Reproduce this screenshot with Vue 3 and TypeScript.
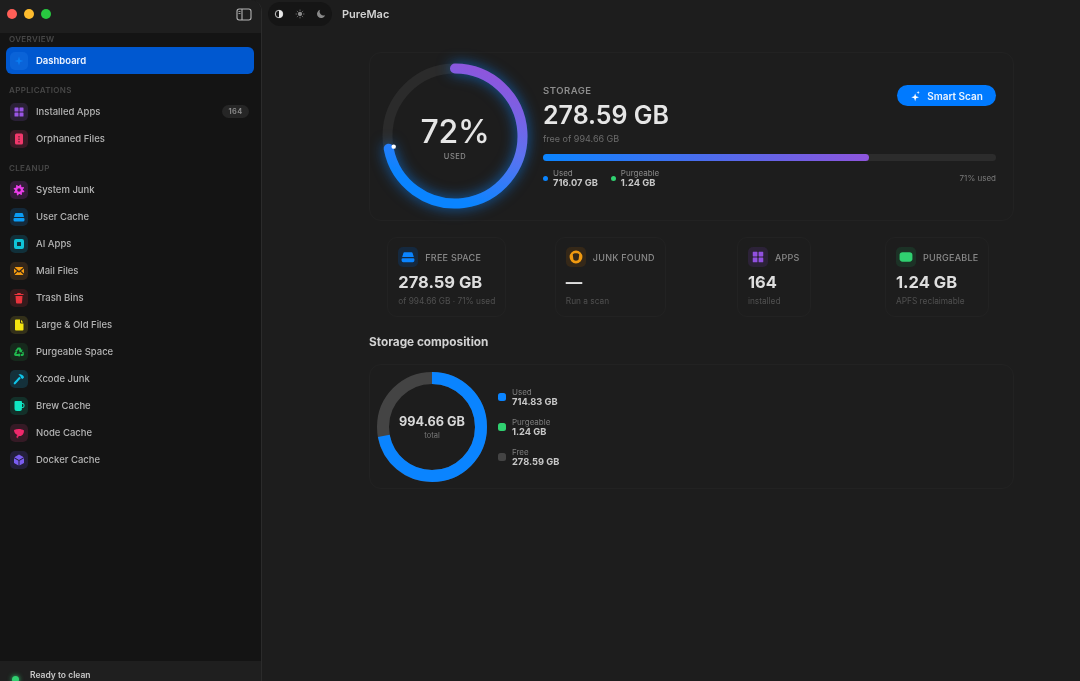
<template>
  <div class="window">
    <aside class="sidebar">
      <div class="titlebar">
        <div class="lights">
          <span class="light red"></span>
          <span class="light yellow"></span>
          <span class="light green"></span>
        </div>
        <svg class="toggle" viewBox="0 0 16 13" width="16" height="13">
          <rect x="1" y="1" width="14" height="11" rx="2.2" fill="none" stroke="#b5b5b5" stroke-width="1.1" />
          <rect x="2.5" y="3" width="2" height="1" fill="#9a9a9a" />
          <rect x="2.5" y="5" width="2" height="1" fill="#9a9a9a" />
          <path d="M6 1v11" stroke="#b5b5b5" stroke-width="1.1" />
        </svg>
      </div>

      <nav class="nav">
        <section v-for="group in groups" :key="group.title" class="group">
          <h4>{{ group.title }}</h4>
          <a v-for="item in group.items" :key="item.label" class="row" :class="{ active: item.active }">
            <span class="tile" :style="{ background: item.tint, color: item.color }">
              <svg viewBox="0 0 24 24" width="12" height="12">
                <path :d="icons[item.icon]" fill="currentColor" fill-rule="evenodd" />
              </svg>
            </span>
            <span class="label">{{ item.label }}</span>
            <span v-if="item.badge" class="badge">{{ item.badge }}</span>
          </a>
        </section>
      </nav>

      <div class="status">
        <span class="status-dot"></span>
        <span>Ready to clean</span>
      </div>
    </aside>

    <main class="main">
      <header class="topbar">
        <div class="modes">
          <svg viewBox="0 0 12 12" width="10" height="10">
            <circle cx="6" cy="6" r="4.5" fill="none" stroke="#e8e8e8" stroke-width="1" />
            <path d="M6 1.5a4.5 4.5 0 0 1 0 9z" fill="#e8e8e8" />
          </svg>
          <svg viewBox="0 0 12 12" width="10" height="10">
            <circle cx="6" cy="6" r="2.6" fill="#8a8a8a" />
            <path d="M6 .8v1.4M6 9.8v1.4M.8 6h1.4M9.8 6h1.4M2.3 2.3l1 1M8.7 8.7l1 1M2.3 9.7l1-1M8.7 3.3l1-1" stroke="#8a8a8a" stroke-width="1" />
          </svg>
          <svg viewBox="0 0 12 12" width="10" height="10">
            <path d="M5 1a5 5 0 1 0 6 6.4A4.6 4.6 0 0 1 5 1z" fill="#8a8a8a" />
          </svg>
        </div>
        <span class="app-name">PureMac</span>
      </header>

      <div class="content">
        <section class="hero">
          <div class="ring">
            <svg viewBox="0 0 146 146" width="146" height="146">
              <defs>
                <linearGradient id="ringGrad" gradientUnits="userSpaceOnUse" x1="108" y1="10" x2="58" y2="128">
                  <stop offset="0" stop-color="#8e55dc" />
                  <stop offset="0.5" stop-color="#5d72f0" />
                  <stop offset="1" stop-color="#0a84ff" />
                </linearGradient>
              </defs>
              <circle cx="73" cy="73" :r="ringR" fill="none" stroke="#2b2b2b" stroke-width="10" />
              <path
                class="ring-arc"
                :d="ringArc"
                fill="none"
                stroke="url(#ringGrad)"
                stroke-width="10"
                stroke-linecap="round"
              />
              <circle :cx="ringDot.x" :cy="ringDot.y" r="2.2" fill="#fff" />
            </svg>
            <div class="ring-text">
              <strong>72%</strong>
              <span>USED</span>
            </div>
          </div>

          <div class="hero-body">
            <div class="hero-top">
              <div>
                <div class="eyebrow">STORAGE</div>
                <div class="free">278.59 GB</div>
                <div class="free-of">free of 994.66 GB</div>
              </div>
              <button class="scan">
                <svg viewBox="0 0 14 14" width="12" height="12">
                  <path d="M6 4l1.1 3.4L10.5 8.5 7.1 9.6 6 13 4.900 9.600 1.500 8.500 4.900 7.400z" fill="#fff" />
                  <path d="M9.500 1l.5 1.500 1.500.5-1.500.5-.5 1.500-.5-1.500L7.500 3l1.500-.5z" fill="#fff" />
                </svg>
                Smart Scan
              </button>
            </div>
            <div class="bar"><div class="bar-fill" :style="{ width: '72%' }"></div></div>
            <div class="bar-legend">
              <div class="bar-key">
                <i class="blue"></i>
                <div><span>Used</span><b>716.07 GB</b></div>
              </div>
              <div class="bar-key">
                <i class="greenish"></i>
                <div><span>Purgeable</span><b>1.24 GB</b></div>
              </div>
              <span class="pct">71% used</span>
            </div>
          </div>
        </section>

        <section class="stats">
          <div v-for="s in stats" :key="s.title" class="stat">
            <div class="stat-head">
              <span class="stat-tile" :style="{ background: s.tint, color: s.color }">
                <svg viewBox="0 0 24 24" width="14" height="14">
                  <path :d="icons[s.icon]" fill="currentColor" fill-rule="evenodd" />
                </svg>
              </span>
              <span>{{ s.title }}</span>
            </div>
            <div class="stat-value">{{ s.value }}</div>
            <div class="stat-sub">{{ s.sub }}</div>
          </div>
        </section>

        <h3 class="section-title">Storage composition</h3>

        <section class="composition">
          <div class="donut">
            <svg viewBox="0 0 112 112" width="112" height="112">
              <circle cx="56" cy="56" r="49" fill="none" stroke="#444" stroke-width="12" />
              <circle
                cx="56"
                cy="56"
                r="49"
                fill="none"
                stroke="#0a84ff"
                stroke-width="12"
                :stroke-dasharray="donutDash"
                transform="rotate(-90 56 56)"
              />
            </svg>
            <div class="donut-text">
              <strong>994.66 GB</strong>
              <span>total</span>
            </div>
          </div>
          <ul class="donut-legend">
            <li v-for="l in legend" :key="l.name">
              <i :style="{ background: l.color }"></i>
              <div><span>{{ l.name }}</span><b>{{ l.value }}</b></div>
            </li>
          </ul>
        </section>
      </div>
    </main>
  </div>
</template>

<script setup lang="ts">
type IconName =
  | "spark" | "grid" | "orphan" | "gear" | "drive" | "chip" | "mail" | "trash"
  | "file" | "recycle" | "hammer" | "mug" | "leaf" | "cube" | "coin" | "pill";

interface NavItem {
  label: string;
  icon: IconName;
  color: string;
  tint: string;
  badge?: string;
  active?: boolean;
}

const gearPath = (): string => {
  const pts: string[] = [];
  for (let i = 0; i < 32; i++) {
    const a = (i / 32) * Math.PI * 2;
    const r = i % 4 < 2 ? 11 : 8;
    pts.push(`${(12 + r * Math.cos(a + 0.2)).toFixed(2)} ${(12 + r * Math.sin(a + 0.2)).toFixed(2)}`);
  }
  return `M${pts.join("L")}zM12 8.500a3.500 3.500 0 1 0 0 7 3.500 3.500 0 0 0 0-7z`;
};

const icons: Record<IconName, string> = {
  spark: "M12 3l2.200 6.800L21 12l-6.800 2.200L12 21l-2.200-6.800L3 12l6.800-2.200z",
  grid: "M4 3h6a1 1 0 0 1 1 1v6a1 1 0 0 1-1 1H4a1 1 0 0 1-1-1V4a1 1 0 0 1 1-1zM14 3h6a1 1 0 0 1 1 1v6a1 1 0 0 1-1 1h-6a1 1 0 0 1-1-1V4a1 1 0 0 1 1-1zM4 13h6a1 1 0 0 1 1 1v6a1 1 0 0 1-1 1H4a1 1 0 0 1-1-1v-6a1 1 0 0 1 1-1zM14 13h6a1 1 0 0 1 1 1v6a1 1 0 0 1-1 1h-6a1 1 0 0 1-1-1v-6a1 1 0 0 1 1-1z",
  orphan: "M7 1h10a3 3 0 0 1 3 3v16a3 3 0 0 1-3 3H7a3 3 0 0 1-3-3V4a3 3 0 0 1 3-3zM11 6v3h2V6zM11 11v3h2v-3zM11 16v3h2v-3z",
  gear: gearPath(),
  drive: "M6 4h12a2 2 0 0 1 2 1.500L22 12H2l2-6.500A2 2 0 0 1 6 4zM3 14h18a2 2 0 0 1 2 2v2a3 3 0 0 1-3 3H4a3 3 0 0 1-3-3v-2a2 2 0 0 1 2-2z",
  chip: "M6 2h12a4 4 0 0 1 4 4v12a4 4 0 0 1-4 4H6a4 4 0 0 1-4-4V6a4 4 0 0 1 4-4zM9 8a1 1 0 0 0-1 1v6a1 1 0 0 0 1 1h6a1 1 0 0 0 1-1V9a1 1 0 0 0-1-1z",
  mail: "M3.500 5L12 12l8.500-7a2 2 0 0 0-1.500-1H5a2 2 0 0 0-1.500 1zM2 7v10l6-5zM22 7v10l-6-5zM9.500 13.300L12 15.300l2.500-2 6.200 6.200A2 2 0 0 1 19 20H5a2 2 0 0 1-1.700-.5z",
  trash: "M9 2h6l1 2h5v2H3V4h5zM5 8h14l-1 13a2 2 0 0 1-2 2H8a2 2 0 0 1-2-2z",
  file: "M6 1h8v6a2 2 0 0 0 2 2h5v12a2 2 0 0 1-2 2H6a2 2 0 0 1-2-2V3a2 2 0 0 1 2-2zM16 1.500L20.500 7H16z",
  recycle: "M9.500 3h5l3 5 2-1-2.200 6-6-1 2-1.200-2.500-4.300-3 5-3.500-2zM2.500 15l2.800-4.500 3.300 2L6.500 16h5v-2.500l4 4.500-4 4.500V20H5.500a3.500 3.500 0 0 1-3-5zM21.500 15a3.500 3.500 0 0 1-3 5H16v-4h3.500l-1.700-2.800 3.300-2z",
  hammer: "M11 3c3-1 7 0 10 3l1 3-3 3-3-2-1-3c-1-1.500-2.500-2.500-4-4zM12.500 7.500l3 3L5 22a2 2 0 0 1-3-3z",
  mug: "M5 2h11a2 2 0 0 1 2 2v2h1a4 4 0 0 1 4 4v2a4 4 0 0 1-4 4h-1.300A5 5 0 0 1 13 22H8a5 5 0 0 1-5-5V4a2 2 0 0 1 2-2zM18 8v6h1a2 2 0 0 0 2-2v-2a2 2 0 0 0-2-2z",
  leaf: "M2 6c6-3 15-3 20 1 0 6-3 11-8 11-2 0-4 1-5 3l2 1c-2 1-4 0-4-2 0-2 1-3 2-4C5 15 2 11 2 6z",
  cube: "M12 1l9.500 5.500L12 12 2.500 6.500zM2 8.500l9 5.200V23l-9-5.200zM22 8.500v9.300L13 23v-9.300z",
  coin: "M12 1a11 11 0 1 0 0 22 11 11 0 0 0 0-22zM12 5.500c-3.500 0-5.500 1-5.500 2.500l1 8c.3 1.500 2 2.500 4.500 2.500s4.200-1 4.500-2.500l1-8c0-1.500-2-2.500-5.500-2.500z",
  pill: "M6 4h12c3 0 5 2 5 4v8c0 2-2 4-5 4H6c-3 0-5-2-5-4V8c0-2 2-4 5-4z",
};

const groups: { title: string; items: NavItem[] }[] = [
  {
    title: "OVERVIEW",
    items: [{ label: "Dashboard", icon: "spark", color: "#0a7cf0", tint: "#0a63d8", active: true }],
  },
  {
    title: "APPLICATIONS",
    items: [
      { label: "Installed Apps", icon: "grid", color: "#9a55e6", tint: "#2a2036", badge: "164" },
      { label: "Orphaned Files", icon: "orphan", color: "#f0386b", tint: "#3a1a25" },
    ],
  },
  {
    title: "CLEANUP",
    items: [
      { label: "System Junk", icon: "gear", color: "#e93de8", tint: "#331c38" },
      { label: "User Cache", icon: "drive", color: "#0a9cf5", tint: "#14293a" },
      { label: "AI Apps", icon: "chip", color: "#0fc4d8", tint: "#11303a" },
      { label: "Mail Files", icon: "mail", color: "#f49b10", tint: "#33261a" },
      { label: "Trash Bins", icon: "trash", color: "#e8333c", tint: "#351a1c" },
      { label: "Large & Old Files", icon: "file", color: "#f5e60f", tint: "#33301a" },
      { label: "Purgeable Space", icon: "recycle", color: "#20b84e", tint: "#16291c" },
      { label: "Xcode Junk", icon: "hammer", color: "#0fc4e8", tint: "#14303a" },
      { label: "Brew Cache", icon: "mug", color: "#0fe8c4", tint: "#133029" },
      { label: "Node Cache", icon: "leaf", color: "#f0286b", tint: "#351a25" },
      { label: "Docker Cache", icon: "cube", color: "#7a5cf0", tint: "#231f3a" },
    ],
  },
];

const stats: { title: string; icon: IconName; color: string; tint: string; value: string; sub: string }[] = [
  { title: "FREE SPACE", icon: "drive", color: "#0a84ff", tint: "#15293f", value: "278.59 GB", sub: "of 994.66 GB · 71% used" },
  { title: "JUNK FOUND", icon: "coin", color: "#f09a10", tint: "#352818", value: "—", sub: "Run a scan" },
  { title: "APPS", icon: "grid", color: "#9150e0", tint: "#2c2238", value: "164", sub: "installed" },
  { title: "PURGEABLE", icon: "pill", color: "#30d070", tint: "#1c3226", value: "1.24 GB", sub: "APFS reclaimable" },
];

const legend = [
  { name: "Used", value: "714.83 GB", color: "#0a84ff" },
  { name: "Purgeable", value: "1.24 GB", color: "#30d070" },
  { name: "Free", value: "278.59 GB", color: "#444" },
];

const ringR = 67.5;
const ringAngle = 0.72 * 2 * Math.PI;
const ringEnd = {
  x: 73 + ringR * Math.sin(ringAngle),
  y: 73 - ringR * Math.cos(ringAngle),
};
const ringArc = `M73 ${73 - ringR}A${ringR} ${ringR} 0 1 1 ${ringEnd.x} ${ringEnd.y}`;
const ringDot = { x: ringEnd.x + 5, y: ringEnd.y - 2 };

const donutLen = 2 * Math.PI * 49;
const donutDash = `${donutLen * 0.72} ${donutLen}`;
</script>

<style>
html,
body {
  margin: 0;
  background: #1d1d1d;
}
</style>

<style scoped>
.window {
  display: flex;
  width: 1080px;
  height: 681px;
  overflow: hidden;
  background: #1d1d1d;
  color: #e2e2e2;
  font-family: Inter, "Liberation Sans", sans-serif;
  filter: blur(0.5px);
}

.sidebar {
  display: flex;
  flex-direction: column;
  flex: none;
  width: 261px;
  background: #141414;
  border-right: 1px solid #2b2b2b;
  border-top-right-radius: 11px;
  overflow: hidden;
}

.titlebar {
  display: flex;
  align-items: center;
  justify-content: space-between;
  flex: none;
  height: 33px;
  padding: 0 9px 5px 7px;
  box-sizing: border-box;
  background: #1e1e1e;
}

.lights {
  display: flex;
  gap: 7px;
}

.light {
  width: 10px;
  height: 10px;
  border-radius: 50%;
}

.red { background: #ff5f57; }
.yellow { background: #febc2e; }
.green { background: #28c840; }

.nav {
  flex: 1;
  padding: 1px 7px 0 6px;
}

.group {
  margin-bottom: 11px;
}

.group h4 {
  margin: 0 0 3px 3px;
  font-size: 8px;
  line-height: 10px;
  font-weight: 600;
  letter-spacing: 0.35px;
  color: #474747;
}

.row {
  display: flex;
  align-items: center;
  height: 27px;
  padding: 0 4px;
  border-radius: 6px;
  font-size: 9.5px;
  font-weight: 500;
  color: #b4b4b4;
}

.row.active {
  background: #0058d0;
  color: #eef4ff;
  font-weight: 600;
}

.tile {
  display: flex;
  align-items: center;
  justify-content: center;
  width: 18px;
  height: 18px;
  margin-right: 8px;
  border-radius: 5px;
}

.label {
  flex: 1;
}

.badge {
  width: 27px;
  height: 13px;
  margin-right: 1px;
  border-radius: 7px;
  background: #262626;
  color: #8f8f8f;
  font-size: 7.5px;
  font-weight: 600;
  line-height: 13px;
  letter-spacing: 0.3px;
  text-align: center;
}

.status {
  display: flex;
  gap: 11px;
  flex: none;
  height: 20px;
  padding: 9px 0 0 12px;
  box-sizing: border-box;
  background: #1f1f1f;
  font-size: 8.5px;
  font-weight: 600;
  line-height: 11px;
  color: #c8c8c8;
}

.status-dot {
  width: 7px;
  height: 7px;
  margin-top: 6px;
  border-radius: 50%;
  background: #30d070;
  box-shadow: 0 0 5px #30d070;
}

.main {
  flex: 1;
  min-width: 0;
}

.topbar {
  display: flex;
  align-items: center;
  gap: 10px;
  height: 28px;
  padding-left: 6px;
}

.modes {
  display: flex;
  align-items: center;
  justify-content: space-between;
  width: 64px;
  height: 24px;
  padding: 0 6px;
  box-sizing: border-box;
  border-radius: 12px;
  background: #151515;
}

.app-name {
  font-size: 11px;
  font-weight: 600;
  color: #d2d2d2;
}

.content {
  width: 645px;
  margin-left: 107px;
  padding-top: 24px;
}

.hero {
  display: flex;
  gap: 15px;
  height: 169px;
  padding: 10px 17px 0 12px;
  box-sizing: border-box;
  border: 1px solid #222;
  border-radius: 12px;
}

.ring {
  position: relative;
  flex: none;
  width: 146px;
  height: 146px;
}

.ring svg {
  overflow: visible;
}

.ring-arc {
  filter: drop-shadow(0 0 7px rgba(10, 132, 255, 0.65));
}

.ring-text {
  position: absolute;
  inset: 0;
  display: flex;
  flex-direction: column;
  align-items: center;
  justify-content: center;
  padding-top: 3px;
}

.ring-text strong {
  font-size: 32px;
  line-height: 36px;
  font-weight: 500;
  letter-spacing: -0.3px;
  color: #e6e6e6;
}

.ring-text span {
  margin-top: 2px;
  font-size: 7.5px;
  line-height: 10px;
  font-weight: 500;
  letter-spacing: 0.5px;
  color: #8a8a8a;
}

.hero-body {
  flex: 1;
  min-width: 0;
  padding-top: 22px;
}

.hero-top {
  display: flex;
  justify-content: space-between;
  align-items: flex-start;
}

.eyebrow {
  font-size: 9.5px;
  line-height: 11px;
  font-weight: 600;
  letter-spacing: 0.5px;
  color: #8d8d8d;
}

.free {
  margin-top: 5px;
  font-size: 25px;
  line-height: 29px;
  font-weight: 600;
  color: #e6e6e6;
}

.free-of {
  font-size: 9px;
  line-height: 12px;
  margin-top: 3px;
  color: #6c6c6c;
}

.scan {
  display: flex;
  align-items: center;
  justify-content: center;
  gap: 5px;
  width: 99px;
  height: 21px;
  padding: 0;
  border: none;
  border-radius: 11px;
  background: #007aff;
  color: #eaf3ff;
  font-family: inherit;
  font-size: 10px;
  font-weight: 600;
}

.bar {
  height: 7px;
  margin-top: 9px;
  border-radius: 4px;
  background: #2c2c2c;
}

.bar-fill {
  height: 100%;
  border-radius: 4px;
  background: linear-gradient(90deg, #0a84ff, #8e55dc);
}

.bar-legend {
  display: flex;
  align-items: center;
  gap: 13px;
  margin-top: 7px;
}

.bar-key {
  display: flex;
  align-items: center;
  gap: 5px;
}

.bar-key i {
  width: 5px;
  height: 5px;
  border-radius: 50%;
}

.bar-key .blue { background: #0a84ff; }
.bar-key .greenish { background: #30d070; }

.bar-key span,
.bar-key b {
  display: block;
}

.bar-key span {
  font-size: 8px;
  line-height: 10px;
  color: #8a8a8a;
}

.bar-key b {
  font-size: 9.3px;
  line-height: 10px;
  font-weight: 700;
  color: #c8c8c8;
}

.pct {
  margin-left: auto;
  font-size: 8px;
  color: #7a7a7a;
}

.stats {
  display: grid;
  grid-template-columns: repeat(4, 1fr);
  justify-items: center;
  width: 654px;
  margin: 16px 0 0 -4px;
}

.stat {
  height: 80px;
  padding: 9px 10px 0;
  box-sizing: border-box;
  border: 1px solid #222;
  border-radius: 10px;
}

.stat-head {
  display: flex;
  align-items: center;
  gap: 7px;
  font-size: 9px;
  font-weight: 500;
  letter-spacing: 0.25px;
  color: #8a8a8a;
}

.stat-tile {
  display: flex;
  align-items: center;
  justify-content: center;
  width: 20px;
  height: 20px;
  border-radius: 5px;
}

.stat-value {
  margin-top: 5px;
  font-size: 16.5px;
  line-height: 20px;
  font-weight: 700;
  color: #dedede;
}

.stat-sub {
  margin-top: 4px;
  font-size: 8.3px;
  line-height: 10px;
  white-space: nowrap;
  color: #505050;
}

.section-title {
  margin: 18px 0 14px;
  font-size: 11.8px;
  line-height: 15px;
  font-weight: 700;
  color: #d2d2d2;
}

.composition {
  display: flex;
  align-items: center;
  gap: 10px;
  height: 125px;
  padding-left: 6px;
  box-sizing: border-box;
  border: 1px solid #222;
  border-radius: 12px;
}

.donut {
  position: relative;
  flex: none;
  width: 112px;
  height: 112px;
}

.donut-text {
  position: absolute;
  inset: 0;
  display: flex;
  flex-direction: column;
  align-items: center;
  justify-content: center;
}

.donut-text strong {
  font-size: 12.7px;
  line-height: 15px;
  font-weight: 700;
  color: #d8d8d8;
}

.donut-text span {
  margin-top: 2px;
  font-size: 7.5px;
  line-height: 9px;
  color: #7a7a7a;
}

.donut-legend {
  display: flex;
  flex-direction: column;
  gap: 10px;
  margin: 0;
  padding: 0;
  list-style: none;
}

.donut-legend li {
  display: flex;
  align-items: center;
  gap: 6px;
}

.donut-legend i {
  width: 8px;
  height: 8px;
  border-radius: 2.5px;
}

.donut-legend span,
.donut-legend b {
  display: block;
}

.donut-legend span {
  font-size: 8px;
  line-height: 10px;
  color: #7d7d7d;
}

.donut-legend b {
  font-size: 9.3px;
  line-height: 10px;
  font-weight: 700;
  color: #c8c8c8;
}
</style>
